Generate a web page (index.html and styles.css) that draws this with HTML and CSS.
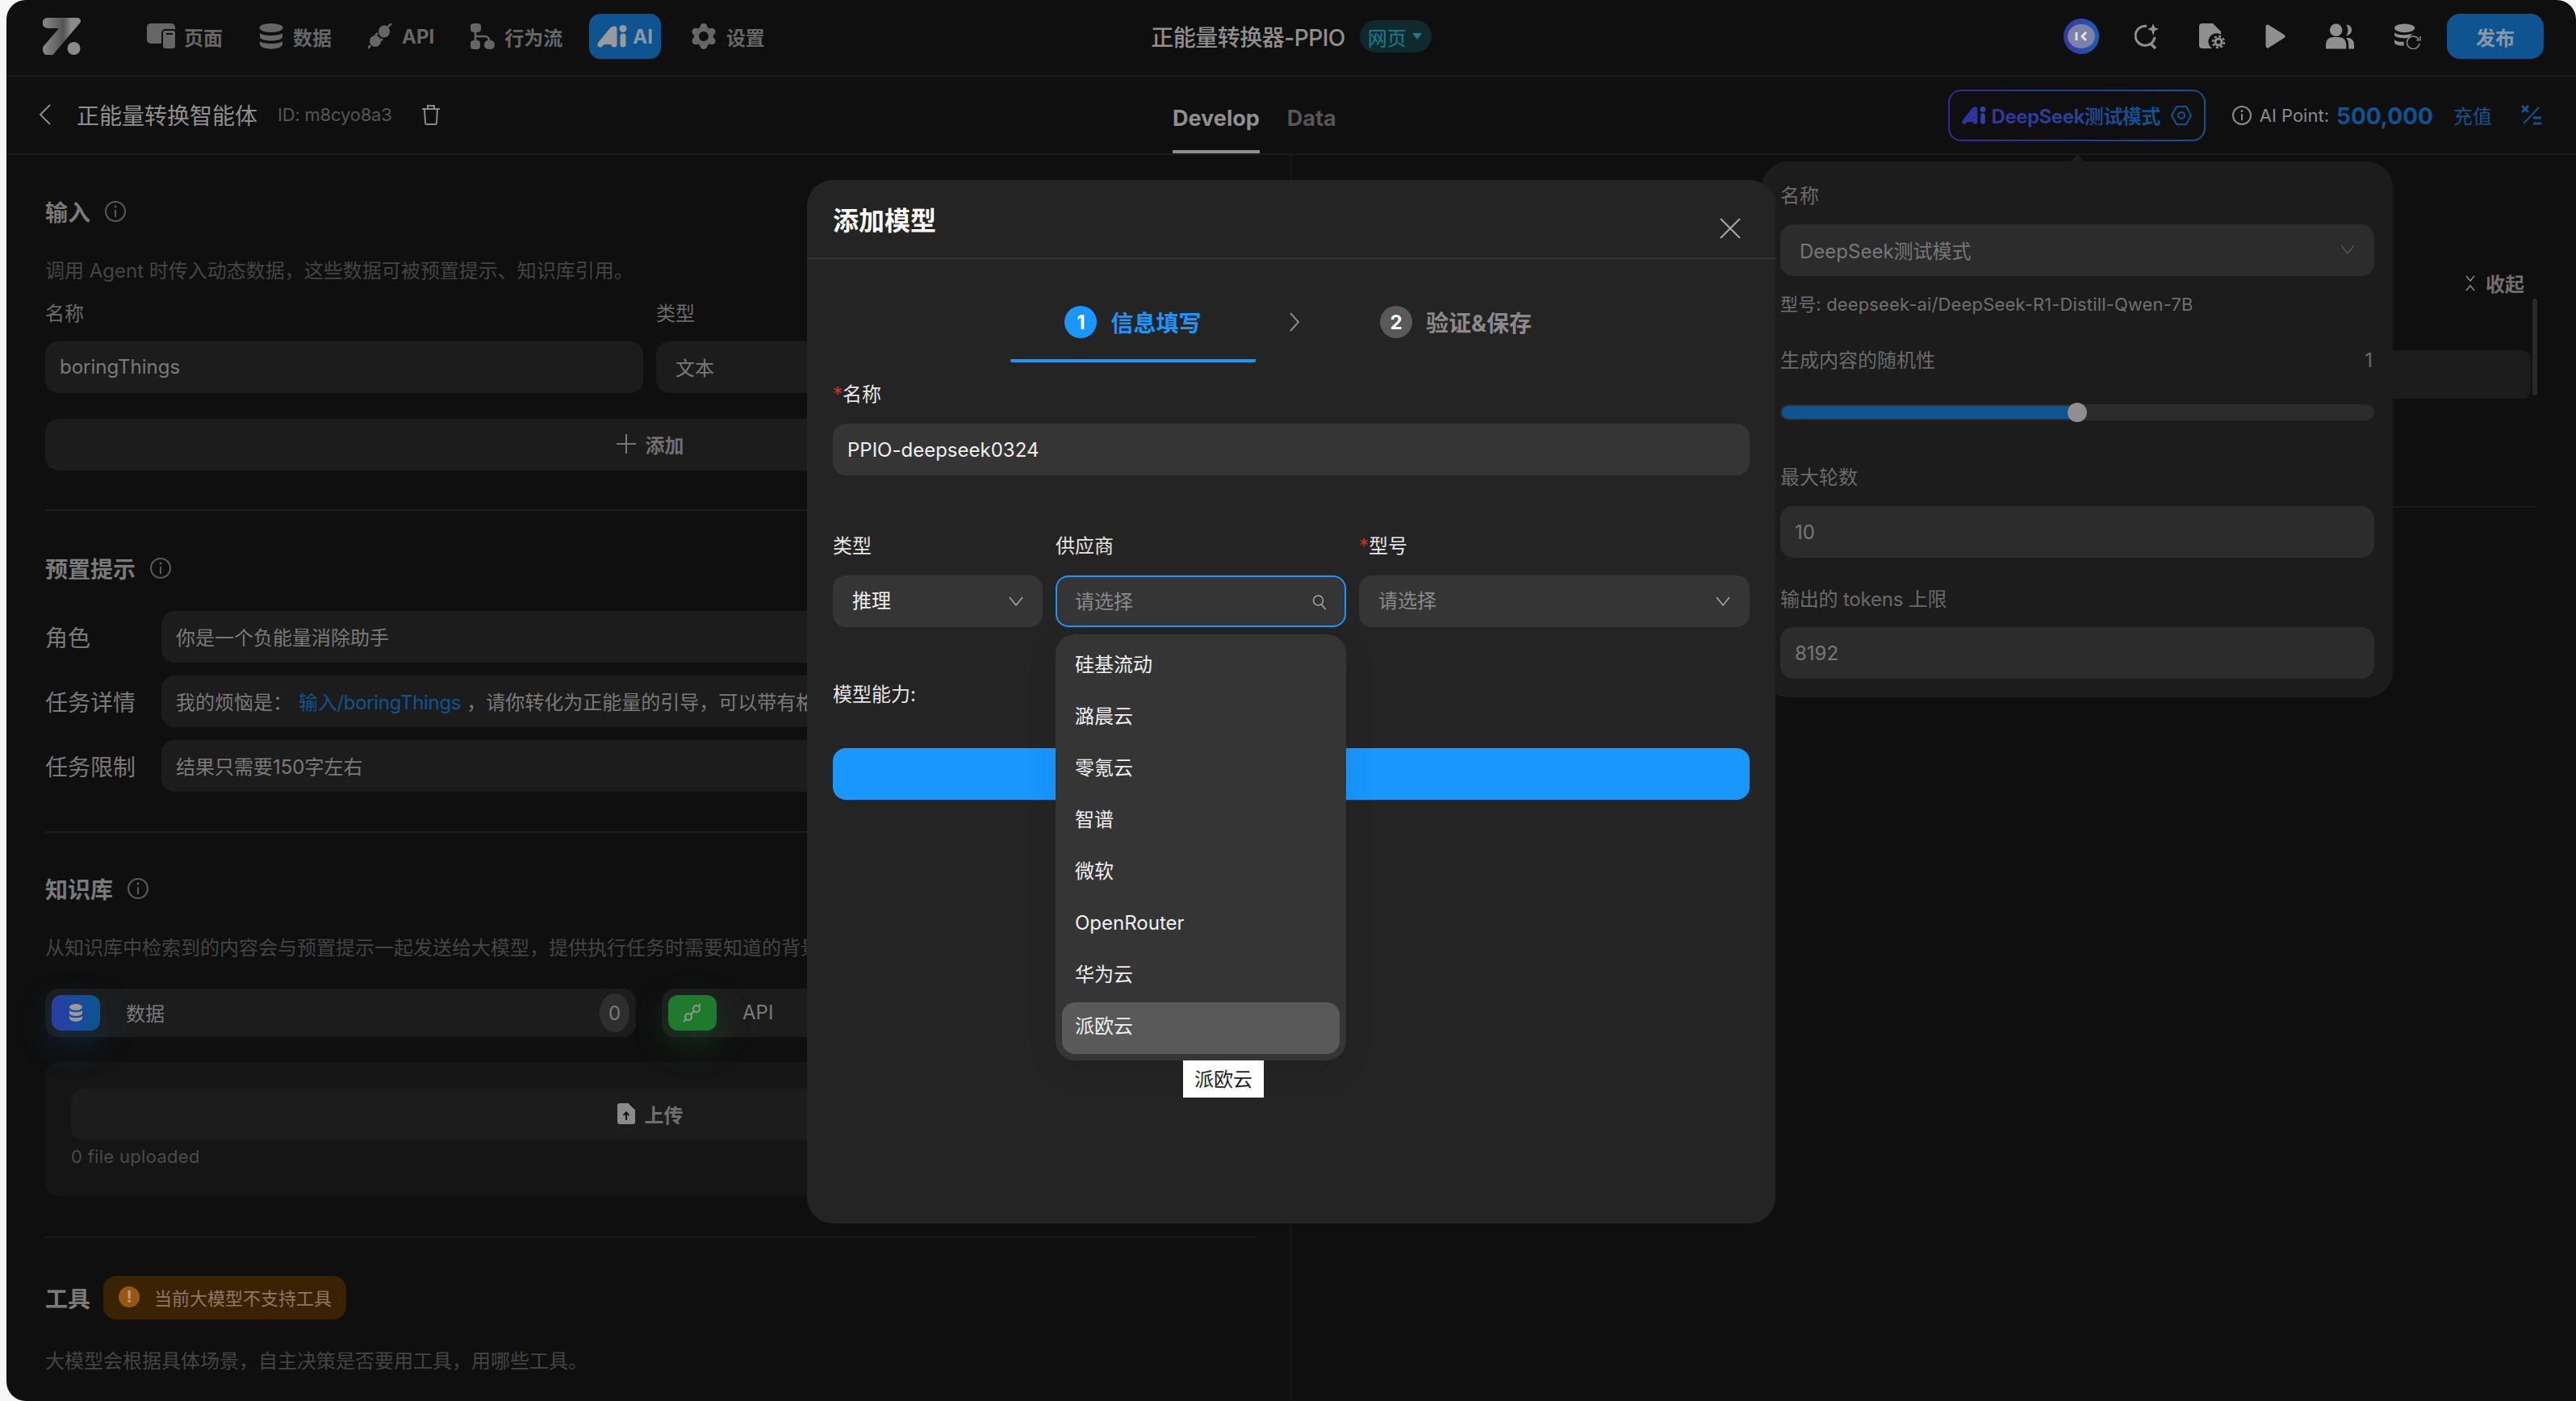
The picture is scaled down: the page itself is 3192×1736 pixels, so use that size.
FILE: index.html
```html
<!DOCTYPE html>
<html lang="zh-CN">
<head>
    <meta charset="UTF-8">
    <meta name="viewport" content="width=device-width, initial-scale=1.0">
    <title>正能量转换器-PPIO</title>
    <link rel="stylesheet" href="styles.css">
</head>
<body>
<div class="app">
    <header class="topbar">
        <div class="topbar-left">
            <svg class="logo" viewBox="0 0 47 46">
                <defs>
                    <linearGradient id="logoBar" x1="0" x2="1" y1="0" y2="0">
                        <stop offset="0" stop-color="#8a8a8a"/>
                        <stop offset="0.55" stop-color="#555"/>
                        <stop offset="0.75" stop-color="#8a8a8a"/>
                    </linearGradient>
                </defs>
                <path fill="url(#logoBar)" d="M6 0H43a4 4 0 0 1 3 6.500L15 43a8 8 0 0 1-15-5 6 6 0 0 1 2-4L20 13H6A6.500 6.500 0 0 1 6 0z"/>
                <circle cx="38.500" cy="38" r="8" fill="#8a8a8a"/>
            </svg>
            <nav class="nav">
                <a class="nav-item">
                    <svg class="nav-icon" width="36" height="32" viewBox="0 0 36 32">
                        <rect x="0" y="0" width="35" height="25" rx="5" fill="#666"/>
                        <rect x="19" y="8" width="17" height="24" rx="4" fill="#666" stroke="#0f0f0f" stroke-width="2"/>
                        <rect x="24" y="12" width="8" height="2" fill="#0f0f0f"/>
                    </svg>
                    页面
                </a>
                <a class="nav-item">
                    <svg class="nav-icon" width="30" height="32" viewBox="0 0 30 32">
                        <ellipse cx="15" cy="5.500" rx="14.500" ry="5.500" fill="#666"/>
                        <path d="M1 12c3 4 25 4 28 0v5c-2 6-26 6-28 0z" fill="#666"/>
                        <path d="M1 22c3 4 25 4 28 0v4c-2 7.500-26 7.500-28 0z" fill="#666"/>
                    </svg>
                    数据
                </a>
                <a class="nav-item">
                    <svg class="nav-icon" width="30" height="32" viewBox="0 0 30 32">
                        <ellipse cx="20" cy="10" rx="7" ry="7.500" fill="#666"/>
                        <ellipse cx="9" cy="22" rx="7" ry="7" fill="#666"/>
                        <path d="M24 5l5-5M3 27l-3 4M9 15l3-3M15 22l3-3" stroke="#666" stroke-width="2.500"/>
                    </svg>
                    API
                </a>
                <a class="nav-item">
                    <svg class="nav-icon" width="30" height="32" viewBox="0 0 30 32">
                        <rect x="0" y="0" width="13" height="11" rx="4" fill="#666"/>
                        <rect x="0" y="21" width="12" height="11" rx="4" fill="#666"/>
                        <rect x="17" y="21" width="13" height="11" rx="5" fill="#666"/>
                        <path d="M6 11v10M6 16h12a5 5 0 0 1 5 5" stroke="#666" stroke-width="2.500" fill="none"/>
                    </svg>
                    行为流
                </a>
                <a class="nav-item nav-item-active">
                    <svg class="nav-icon" width="38" height="28" viewBox="0 0 38 28">
                        <path d="M4 24L17 8c1.500-2 3-3 4-3v19" stroke="#9a9a9a" stroke-width="7" stroke-linecap="round" stroke-linejoin="round" fill="#9a9a9a"/>
                        <path d="M32 14v10" stroke="#9a9a9a" stroke-width="7" stroke-linecap="round"/>
                        <circle cx="32" cy="4.500" r="4.500" fill="#9a9a9a"/>
                    </svg>
                    AI
                </a>
                <a class="nav-item">
                    <svg class="nav-icon" width="32" height="32" viewBox="0 0 32 32">
                        <g fill="#666">
                            <circle cx="16" cy="16" r="12"/>
                            <circle cx="16" cy="4.500" r="4.500"/>
                            <circle cx="16" cy="27.500" r="4.500"/>
                            <circle cx="6" cy="10.200" r="4.500"/>
                            <circle cx="26" cy="10.200" r="4.500"/>
                            <circle cx="6" cy="21.800" r="4.500"/>
                            <circle cx="26" cy="21.800" r="4.500"/>
                        </g>
                        <circle cx="16" cy="16" r="6" fill="#0f0f0f"/>
                    </svg>
                    设置
                </a>
            </nav>
        </div>
        <div class="topbar-center">
            <span class="app-name">正能量转换器-PPIO</span>
            <span class="app-type">网页<i class="caret"></i></span>
        </div>
        <div class="topbar-right">
            <span class="avatar"><span class="avatar-inner">
                <svg width="18" height="12" viewBox="0 0 18 12"><path d="M3 1v10" stroke="#e0e0e0" stroke-width="3"/><path d="M15 1l-5 5 5 5" stroke="#e0e0e0" stroke-width="3" fill="none"/></svg>
            </span></span>
            <svg class="tool-icon" width="30" height="32" viewBox="0 0 30 32">
                <path d="M15 3.500A12 12 0 1 0 25 17" fill="none" stroke="#8f8f8f" stroke-width="3"/>
                <path d="M20 25l6 6" stroke="#8f8f8f" stroke-width="3.500"/>
                <path d="M23 0l2 5 5 2-5 2-2 6-2-6-5-2 5-2z" fill="#8f8f8f"/>
            </svg>
            <svg class="tool-icon" width="32" height="32" viewBox="0 0 32 32">
                <path d="M4 0h13l10 10v4a10 10 0 0 0-11 17H4a4 4 0 0 1-4-4V4a4 4 0 0 1 4-4z" fill="#8f8f8f"/>
                <path d="M19 0l7 7" stroke="#0f0f0f" stroke-width="2"/>
                <circle cx="24" cy="23" r="4" fill="none" stroke="#8f8f8f" stroke-width="3"/>
                <circle cx="24" cy="23" r="7" fill="none" stroke="#8f8f8f" stroke-width="2.500" stroke-dasharray="3 2.500"/>
            </svg>
            <svg class="tool-icon" width="25" height="30" viewBox="0 0 25 30">
                <path d="M3 3L22 15 3 27z" fill="#8f8f8f" stroke="#8f8f8f" stroke-width="5" stroke-linejoin="round"/>
            </svg>
            <svg class="tool-icon" width="35" height="32" viewBox="0 0 36 32">
                <ellipse cx="13" cy="8" rx="8" ry="8" fill="#8f8f8f"/>
                <path d="M0 32v-6a9 9 0 0 1 9-9h8a9 9 0 0 1 9 9v6z" fill="#8f8f8f"/>
                <path d="M26 1a7 7 0 0 1 0 14 12 12 0 0 0 0-14zM29 18a8 8 0 0 1 7 8v6h-7v-6a12 12 0 0 0-3-8z" fill="#8f8f8f"/>
            </svg>
            <svg class="tool-icon" width="33" height="32" viewBox="0 0 34 32">
                <ellipse cx="13" cy="5.500" rx="13" ry="5.500" fill="#8f8f8f"/>
                <path d="M0 11c3 4 19 4 24 1l-6 6c-8 1-15 0-18-3z" fill="#8f8f8f"/>
                <path d="M0 20c3 3 8 3 12 3v5c-6 0-10-1-12-3z" fill="#8f8f8f"/>
                <path d="M31 20a8 8 0 1 0 1 5" fill="none" stroke="#8f8f8f" stroke-width="1.500"/>
                <path d="M33 16v5h-5" fill="none" stroke="#8f8f8f" stroke-width="1.500"/>
            </svg>
            <button class="publish">发布</button>
        </div>
    </header>

    <div class="subbar">
        <div class="subbar-left">
            <svg class="back" width="16" height="26" viewBox="0 0 16 26"><path d="M14 1L2 13l12 12" fill="none" stroke="#8a8a8a" stroke-width="2"/></svg>
            <span class="agent-name">正能量转换智能体</span>
            <span class="agent-id">ID: m8cyo8a3</span>
            <svg class="trash" width="24" height="26" viewBox="0 0 24 26">
                <path d="M1 6h22M8 6V2h8v4M4 6l1 17a2 2 0 0 0 2 2h10a2 2 0 0 0 2-2l1-17" fill="none" stroke="#8a8a8a" stroke-width="2"/>
            </svg>
        </div>
        <div class="tabs">
            <span class="tab tab-active">Develop</span>
            <span class="tab">Data</span>
        </div>
        <div class="subbar-right">
            <button class="model-btn">
                <svg width="30" height="22" viewBox="0 0 30 22">
                    <path d="M3 19L13 6c1.500-2 2.500-3 3.500-3v16" stroke="#2f34a0" stroke-width="5.500" stroke-linecap="round" stroke-linejoin="round" fill="#2f34a0"/>
                    <path d="M26 11v8" stroke="#2b46a0" stroke-width="5.500" stroke-linecap="round"/>
                    <circle cx="26" cy="3.500" r="3.500" fill="#2b46a0"/>
                </svg>
                <span class="model-text">DeepSeek测试模式</span>
                <svg class="model-eye" width="26" height="24" viewBox="0 0 26 24">
                    <path d="M7 1h12l6 11-6 11H7L1 12z" fill="none" stroke="#0d5490" stroke-width="2" stroke-linejoin="round"/>
                    <circle cx="13" cy="12" r="4" fill="none" stroke="#0d5490" stroke-width="2"/>
                </svg>
            </button>
            <svg class="info-icon" width="24" height="24" viewBox="0 0 24 24">
                <circle cx="12" cy="12" r="11" fill="none" stroke="#8a8a8a" stroke-width="2"/>
                <path d="M12 10v8" stroke="#8a8a8a" stroke-width="2"/>
                <circle cx="12" cy="6.500" r="1.500" fill="#8a8a8a"/>
            </svg>
            <span class="point-label">AI Point:</span>
            <span class="point-value">500,000</span>
            <span class="recharge">充值</span>
            <svg class="collapse-icon" width="26" height="26" viewBox="0 0 26 26">
                <path d="M1 1l8 8M9 1L1 9" stroke="#0d5490" stroke-width="3"/>
                <path d="M3 23L22 3" stroke="#0d5490" stroke-width="2"/>
                <path d="M15 16h10M15 23h10" stroke="#0d5490" stroke-width="3"/>
            </svg>
        </div>
    </div>

    <main class="content">
        <section class="left-pane">
            <h2 class="sec-title">输入 <svg class="hint-icon" viewBox="0 0 26 26"><circle cx="13" cy="13" r="12" fill="none" stroke="#5a5a5a" stroke-width="2"/><path d="M13 11v9" stroke="#5a5a5a" stroke-width="2"/><circle cx="13" cy="7" r="1.500" fill="#5a5a5a"/></svg></h2>
            <p class="sec-hint">调用 Agent 时传入动态数据，这些数据可被预置提示、知识库引用。</p>
            <div class="var-labels">
                <span class="var-label var-label-name">名称</span>
                <span class="var-label">类型</span>
            </div>
            <div class="var-row">
                <div class="field var-name">boringThings</div>
                <div class="field var-type">文本</div>
            </div>
            <div class="wide-btn add-btn">
                <svg width="24" height="24" viewBox="0 0 24 24"><path d="M12 0v24M0 12h24" stroke="#777" stroke-width="2"/></svg>
                添加
            </div>
            <div class="divider"></div>

            <h2 class="sec-title">预置提示 <svg class="hint-icon" viewBox="0 0 26 26"><circle cx="13" cy="13" r="12" fill="none" stroke="#5a5a5a" stroke-width="2"/><path d="M13 11v9" stroke="#5a5a5a" stroke-width="2"/><circle cx="13" cy="7" r="1.500" fill="#5a5a5a"/></svg></h2>
            <div class="prompts">
                <div class="prompt-row">
                    <span class="prompt-label">角色</span>
                    <div class="field prompt-field">你是一个负能量消除助手</div>
                </div>
                <div class="prompt-row">
                    <span class="prompt-label">任务详情</span>
                    <div class="field prompt-field">我的烦恼是：<span class="var-link">输入/boringThings</span>，请你转化为正能量的引导，可以带有格</div>
                </div>
                <div class="prompt-row">
                    <span class="prompt-label">任务限制</span>
                    <div class="field prompt-field">结果只需要150字左右</div>
                </div>
            </div>
            <div class="divider divider-prompts"></div>

            <h2 class="sec-title">知识库 <svg class="hint-icon" viewBox="0 0 26 26"><circle cx="13" cy="13" r="12" fill="none" stroke="#5a5a5a" stroke-width="2"/><path d="M13 11v9" stroke="#5a5a5a" stroke-width="2"/><circle cx="13" cy="7" r="1.500" fill="#5a5a5a"/></svg></h2>
            <p class="sec-hint">从知识库中检索到的内容会与预置提示一起发送给大模型，提供执行任务时需要知道的背景</p>
            <div class="kb-cards">
                <div class="kb-card">
                    <span class="kb-tile kb-tile-data">
                        <svg width="18" height="22" viewBox="0 0 18 22">
                            <ellipse cx="9" cy="4" rx="8" ry="4" fill="#9a9a9a"/>
                            <path d="M1 8c2 3 14 3 16 0v4c-2 4-14 4-16 0z" fill="#9a9a9a"/>
                            <path d="M1 15c2 3 14 3 16 0v3c-2 5-14 5-16 0z" fill="#9a9a9a"/>
                        </svg>
                    </span>
                    <span class="kb-name">数据</span>
                    <span class="kb-count">0</span>
                </div>
                <div class="kb-card">
                    <span class="kb-tile kb-tile-api">
                        <svg width="24" height="24" viewBox="0 0 24 24">
                            <circle cx="7" cy="17" r="4" fill="none" stroke="#8a9a8a" stroke-width="2"/>
                            <circle cx="17" cy="7" r="4" fill="none" stroke="#8a9a8a" stroke-width="2"/>
                            <path d="M10 14l4-4M4 20l-3 3M20 4l2-3" stroke="#8a9a8a" stroke-width="2"/>
                        </svg>
                    </span>
                    <span class="kb-name">API</span>
                    <span class="kb-count">0</span>
                </div>
            </div>
            <div class="upload-panel">
                <div class="wide-btn upload-btn">
                    <svg width="22" height="26" viewBox="0 0 22 26">
                        <path d="M3 0h11l8 8v15a3 3 0 0 1-3 3H3a3 3 0 0 1-3-3V3a3 3 0 0 1 3-3z" fill="#8a8a8a"/>
                        <path d="M15 0l7 7" stroke="#161616" stroke-width="2"/>
                        <path d="M11 21v-9M7.500 15l3.500-3.500 3.500 3.500" fill="none" stroke="#161616" stroke-width="2"/>
                    </svg>
                    上传
                </div>
                <p class="upload-count">0 file uploaded</p>
            </div>
            <div class="divider divider-tools"></div>
            <div class="tools-head">
                <h2 class="sec-title">工具</h2>
                <div class="tools-warning">
                    <span class="warn-dot">!</span>
                    当前大模型不支持工具
                </div>
            </div>
            <p class="sec-hint sec-hint-tools">大模型会根据具体场景，自主决策是否要用工具，用哪些工具。</p>
        </section>

        <section class="right-pane">
            <div class="fold">
                <svg width="14" height="20" viewBox="0 0 14 20"><path d="M2 1l5 6 5-6M2 19l5-6 5 6" fill="none" stroke="#8a8a8a" stroke-width="1.500"/></svg>
                收起
            </div>
            <div class="preview-card"></div>
            <div class="preview-line"></div>
            <span class="preview-scroll"></span>
        </section>
    </main>

    <aside class="param-popover">
        <span class="param-arrow"></span>
        <label class="param-label">名称</label>
        <div class="param-field param-select">DeepSeek测试模式
            <svg width="18" height="12" viewBox="0 0 18 12"><path d="M1 1l8 10 8-10" fill="none" stroke="#555" stroke-width="1.500"/></svg>
        </div>
        <p class="param-model">型号: deepseek-ai/DeepSeek-R1-Distill-Qwen-7B</p>
        <div class="param-slider-head"><span>生成内容的随机性</span><span>1</span></div>
        <div class="slider">
            <div class="slider-fill"></div>
            <span class="slider-thumb"></span>
        </div>
        <label class="param-label param-label-rounds">最大轮数</label>
        <div class="param-field param-input">10</div>
        <label class="param-label param-label-tokens">输出的 tokens 上限</label>
        <div class="param-field param-input">8192</div>
    </aside>

    <div class="modal">
        <div class="modal-head">
            <h3 class="modal-title">添加模型</h3>
            <svg class="modal-close" width="26" height="26" viewBox="0 0 26 26"><path d="M1 1l24 24M25 1L1 25" stroke="#a8a8a8" stroke-width="2"/></svg>
        </div>
        <div class="steps">
            <div class="step step-active"><span class="step-num">1</span>信息填写</div>
            <svg class="step-arrow" width="14" height="24" viewBox="0 0 14 24"><path d="M2 1l10 11L2 23" fill="none" stroke="#8a8a8a" stroke-width="2"/></svg>
            <div class="step"><span class="step-num">2</span>验证&amp;保存</div>
        </div>
        <form class="modal-form">
            <label class="form-label"><em>*</em>名称</label>
            <div class="form-input form-input-name">PPIO-deepseek0324</div>
            <div class="form-grid">
                <label class="form-label">类型</label>
                <label class="form-label">供应商</label>
                <label class="form-label"><em>*</em>型号</label>
                <div class="form-input form-select">推理
                    <svg width="18" height="12" viewBox="0 0 18 12"><path d="M1 1l8 10 8-10" fill="none" stroke="#a8a8a8" stroke-width="1.500"/></svg>
                </div>
                <div class="form-input form-select form-select-open"><span class="placeholder">请选择</span>
                    <svg width="18" height="20" viewBox="0 0 18 20"><circle cx="7.500" cy="8" r="6" fill="none" stroke="#a8a8a8" stroke-width="1.500"/><path d="M11.500 13l5 6" stroke="#a8a8a8" stroke-width="1.500"/></svg>
                </div>
                <div class="form-input form-select"><span class="placeholder">请选择</span>
                    <svg width="18" height="12" viewBox="0 0 18 12"><path d="M1 1l8 10 8-10" fill="none" stroke="#a8a8a8" stroke-width="1.500"/></svg>
                </div>
            </div>
            <div class="form-ability">模型能力:</div>
            <button class="form-submit" type="button"></button>
        </form>
        <ul class="vendor-menu">
            <li>硅基流动</li>
            <li>潞晨云</li>
            <li>零氪云</li>
            <li>智谱</li>
            <li>微软</li>
            <li>OpenRouter</li>
            <li>华为云</li>
            <li class="vendor-hover">派欧云</li>
        </ul>
        <div class="vendor-tip">派欧云</div>
    </div>
</div>
</body>
</html>
```

FILE: styles.css
```css
* {
    box-sizing: border-box;
}
html, body {
    margin: 0;
    height: 100%;
    background: #f6f6f6;
    overflow: hidden;
}
body {
    font-family: Inter, "Noto Sans CJK SC", sans-serif;
    font-size: 24px;
    color: #8a8a8a;
}
h2, h3, p, ul {
    margin: 0;
    padding: 0;
}
button {
    border: 0;
    font-family: inherit;
}

.app {
    position: relative;
    height: 1736px;
    margin-left: 8px;
    background: #0f0f0f;
    border-radius: 24px 24px 0 24px;
    overflow: hidden;
}

/* top bar */
.topbar {
    display: grid;
    grid-template-columns: 1fr auto 1fr;
    align-items: center;
    height: 95px;
    padding-bottom: 3px;
    border-bottom: 2px solid #1c1c1c;
}
.topbar-left {
    display: flex;
    align-items: center;
    padding-left: 45px;
}
.logo {
    width: 47px;
    height: 46px;
    margin-right: 82px;
}
.nav {
    display: flex;
    align-items: center;
    gap: 45px;
}
.nav-item {
    display: flex;
    align-items: center;
    gap: 12px;
    font-size: 24px;
    font-weight: 700;
    color: #666;
    white-space: nowrap;
}
.nav-item:nth-child(1) {
    gap: 10px;
}
.nav-item-active {
    height: 56px;
    margin: 0 -8px 0 -12px;
    padding: 0 10px;
    gap: 6px;
    background: #0d5490;
    color: #8a98a6;
    border-radius: 14px;
}
.topbar-center {
    display: flex;
    align-items: center;
    gap: 18px;
}
.app-name {
    font-size: 28px;
    font-weight: 500;
    letter-spacing: -0.5px;
    color: #8f8f8f;
}
.app-type {
    display: flex;
    align-items: center;
    gap: 7px;
    height: 40px;
    padding: 0 12px 0 10px;
    font-size: 24px;
    color: #0f7f8c;
    background: #10292c;
    border-radius: 20px;
}
.caret {
    width: 0;
    height: 0;
    border: 6px solid transparent;
    border-top: 8px solid #0f7f8c;
    border-bottom: 0;
}
.topbar-right {
    display: flex;
    align-items: center;
    justify-content: flex-end;
    padding-right: 40px;
}
.avatar {
    display: flex;
    align-items: center;
    justify-content: center;
    width: 44px;
    height: 44px;
    margin-right: 44px;
    background: linear-gradient(90deg, #3a33a8, #1b5fb0);
    border-radius: 50%;
}
.avatar-inner {
    display: flex;
    align-items: center;
    justify-content: center;
    width: 34px;
    height: 30px;
    background: #7d82a8;
    border-radius: 50%;
}
.tool-icon {
    margin-right: 50px;
}
.publish {
    width: 120px;
    height: 56px;
    margin-left: -18px;
    font-size: 24px;
    font-weight: 700;
    color: #8a98a6;
    background: #0d5490;
    border-radius: 16px;
}

/* second bar */
.subbar {
    display: flex;
    align-items: center;
    height: 97px;
    border-bottom: 2px solid #1c1c1c;
}
.subbar-left {
    display: flex;
    align-items: center;
    width: 1445px;
    padding: 0 0 2px 40px;
}
.back {
    margin-right: 31px;
}
.agent-name {
    font-size: 28px;
    color: #8f8f8f;
}
.agent-id {
    margin-left: 25px;
    font-size: 22px;
    letter-spacing: -0.2px;
    color: #555;
}
.trash {
    margin-left: 36px;
}
.tabs {
    display: flex;
    align-self: stretch;
    gap: 34px;
}
.tab {
    display: flex;
    align-items: center;
    padding-top: 12px;
    font-size: 27px;
    font-weight: 700;
    color: #555;
    border-bottom: 4px solid transparent;
}
.tab-active {
    color: #8f8f8f;
    border-bottom-color: #8f8f8f;
}
.subbar-right {
    display: flex;
    align-items: center;
    margin-left: auto;
    padding-right: 42px;
}
.model-btn {
    display: flex;
    align-items: center;
    justify-content: center;
    gap: 7px;
    width: 319px;
    height: 64px;
    margin-right: 33px;
    border: 2px solid transparent;
    background: linear-gradient(#0f0f0f, #0f0f0f) padding-box, linear-gradient(90deg, #35279c, #0d5490) border-box;
    border-radius: 16px;
}
.model-text {
    font-size: 24px;
    font-weight: 700;
    letter-spacing: -0.5px;
    background: linear-gradient(90deg, #38329c, #0d5490);
    -webkit-background-clip: text;
    background-clip: text;
    color: transparent;
}
.model-eye {
    margin-left: 6px;
}
.point-label {
    margin-left: 10px;
    font-size: 22px;
    color: #8a8a8a;
}
.point-value {
    margin-left: 9px;
    padding-top: 2px;
    font-size: 28px;
    font-weight: 700;
    color: #0d5490;
}
.recharge {
    margin-left: 25px;
    font-size: 24px;
    color: #0d5490;
}
.collapse-icon {
    margin-left: 36px;
}

/* page content behind the modal */
.content {
    display: flex;
    height: 1544px;
}
.left-pane {
    width: 1592px;
    padding: 50px 44px 0 48px;
    border-right: 1px solid #1c1c1c;
    flex-shrink: 0;
}
.sec-title {
    display: flex;
    align-items: center;
    gap: 18px;
    height: 40px;
    font-size: 28px;
    font-weight: 700;
    color: #7a7a7a;
}
.hint-icon {
    width: 26px;
    height: 26px;
}
.sec-hint {
    height: 34px;
    margin-top: 36px;
    padding-top: 1px;
    font-size: 24px;
    line-height: 34px;
    color: #444;
    white-space: nowrap;
}
.var-labels {
    display: flex;
    height: 34px;
    margin-top: 19px;
}
.var-label {
    padding-top: 1px;
    font-size: 24px;
    line-height: 34px;
    color: #6a6a6a;
}
.var-label-name {
    width: 757px;
}
.var-row {
    display: flex;
    gap: 16px;
    margin-top: 18px;
}
.field {
    display: flex;
    align-items: center;
    height: 64px;
    padding: 0 18px 2px;
    background: #1c1c1c;
    border-radius: 16px;
    color: #7a7a7a;
    white-space: nowrap;
    overflow: hidden;
}
.var-name {
    width: 741px;
}
.var-type {
    flex: 1;
    padding-left: 24px;
}
.wide-btn {
    display: flex;
    align-items: center;
    justify-content: center;
    gap: 12px;
    height: 64px;
    padding-bottom: 2px;
    font-weight: 700;
    color: #6f6f6f;
    background: #1c1c1c;
    border-radius: 16px;
}
.add-btn {
    margin-top: 32px;
}
.divider {
    height: 2px;
    margin: 48px 0 51px;
    background: #1c1c1c;
}
.prompts {
    display: flex;
    flex-direction: column;
    gap: 16px;
    margin-top: 33px;
}
.prompt-row {
    display: flex;
    align-items: center;
}
.prompt-label {
    width: 144px;
    font-size: 28px;
    color: #7a7a7a;
}
.prompt-field {
    flex: 1;
    padding: 0 20px 2px 18px;
}
.var-link {
    margin: 0 7px 0 8px;
    letter-spacing: -0.3px;
    color: #0d5490;
}
.divider-prompts {
    margin: 49px 0 49px;
}
.kb-cards {
    display: grid;
    grid-template-columns: 732px 1fr;
    gap: 32px;
    margin-top: 34px;
}
.kb-card {
    position: relative;
    display: flex;
    align-items: center;
    height: 60px;
    padding: 0 8px 0;
    background: #1c1c1c;
    border-radius: 16px;
}
.kb-tile {
    display: flex;
    align-items: center;
    justify-content: center;
    width: 60px;
    height: 44px;
    border-radius: 12px;
}
.kb-tile-data {
    background: linear-gradient(90deg, #2b3ea6, #0d5490);
    box-shadow: 0 14px 40px rgba(13, 84, 144, 0.35);
}
.kb-tile-api {
    background: #1f7a30;
    box-shadow: 0 14px 40px rgba(31, 122, 48, 0.35);
}
.kb-name {
    margin-left: 32px;
    padding-bottom: 2px;
    color: #7a7a7a;
}
.kb-count {
    display: flex;
    align-items: center;
    justify-content: center;
    width: 37px;
    height: 48px;
    margin-left: auto;
    background: #2e2e2e;
    border-radius: 50%;
    color: #7a7a7a;
}
.upload-panel {
    height: 166px;
    margin-top: 31px;
    padding: 33px 32px 0;
    background: #151515;
    border-radius: 16px;
}
.upload-count {
    height: 34px;
    margin-top: 3px;
    font-size: 22px;
    letter-spacing: 0.3px;
    line-height: 34px;
    color: #4a4a4a;
}
.divider-tools {
    margin: 50px 0 47px;
}
.tools-head {
    display: flex;
    align-items: center;
    gap: 16px;
}
.tools-warning {
    display: flex;
    align-items: center;
    gap: 18px;
    height: 54px;
    padding: 0 18px 2px 19px;
    font-size: 22px;
    color: #8a7a66;
    background: #3b2203;
    border-radius: 16px;
}
.warn-dot {
    display: flex;
    align-items: center;
    justify-content: center;
    width: 26px;
    height: 26px;
    font-size: 20px;
    font-weight: 700;
    color: #b8a080;
    background: #96590f;
    border-radius: 50%;
}
.sec-hint-tools {
    margin-top: 34px;
}
.right-pane {
    position: relative;
    flex: 1;
    padding: 140px 48px 0 0;
}
.fold {
    display: flex;
    align-items: center;
    justify-content: flex-end;
    gap: 12px;
    height: 40px;
    padding: 0 16px 3px 0;
    font-weight: 700;
    color: #6f6f6f;
}
.preview-card {
    height: 60px;
    margin-top: 62px;
    margin-right: 8px;
    background: #1c1c1c;
    border-radius: 12px;
}
.preview-line {
    height: 2px;
    margin-top: 133px;
    background: #1c1c1c;
}
.preview-scroll {
    position: absolute;
    top: 178px;
    right: 48px;
    width: 6px;
    height: 120px;
    background: #2a2a2a;
    border-radius: 3px;
}

/* parameters popover, opened from the model button */
.param-popover {
    position: absolute;
    left: 2175px;
    top: 200px;
    width: 782px;
    height: 664px;
    padding: 26px 23px 0;
    background: #1c1c1c;
    border-radius: 32px;
}
.param-arrow {
    position: absolute;
    top: -9px;
    left: 383px;
    width: 0;
    height: 0;
    border: 8px solid transparent;
    border-bottom: 9px solid #1c1c1c;
    border-top: 0;
}
.param-label {
    display: block;
    height: 34px;
    font-size: 24px;
    line-height: 34px;
    color: #6a6a6a;
}
.param-field {
    display: flex;
    align-items: center;
    height: 64px;
    margin-top: 18px;
    padding: 0 24px 2px;
    font-size: 24px;
    color: #777;
    background: #2c2c2c;
    border-radius: 16px;
}
.param-select {
    justify-content: space-between;
}
.param-input {
    padding: 0 18px;
}
.param-model {
    height: 34px;
    margin-top: 18px;
    font-size: 22px;
    letter-spacing: 0.15px;
    line-height: 34px;
    color: #6f6f6f;
}
.param-slider-head {
    display: flex;
    justify-content: space-between;
    height: 34px;
    margin-top: 36px;
    padding-right: 2px;
    font-size: 24px;
    line-height: 34px;
    color: #6a6a6a;
}
.slider {
    position: relative;
    height: 20px;
    margin-top: 37px;
    padding: 2px;
    background: #2c2c2c;
    border-radius: 10px;
}
.slider-fill {
    width: 366px;
    height: 16px;
    background: #0d5490;
    border-radius: 8px;
}
.slider-thumb {
    position: absolute;
    left: 356px;
    top: -2px;
    width: 24px;
    height: 24px;
    background: #8f8f8f;
    border-radius: 50%;
}
.param-label-rounds {
    margin-top: 54px;
}
.param-label-tokens {
    margin-top: 35px;
    letter-spacing: -0.2px;
}
.param-label-tokens + .param-field {
    margin-top: 17px;
}

/* add model modal */
.modal {
    position: absolute;
    left: 992px;
    top: 223px;
    width: 1200px;
    height: 1293px;
    background: #242424;
    border-radius: 32px;
    color: #e6e6e6;
}
.modal-head {
    display: flex;
    justify-content: space-between;
    height: 98px;
    padding: 30px 43px 0 32px;
    border-bottom: 2px solid #333;
}
.modal-title {
    font-size: 32px;
    line-height: 42px;
    font-weight: 700;
    color: #fff;
}
.modal-close {
    margin-top: 17px;
}
.steps {
    display: flex;
    align-items: flex-start;
    margin-top: 58px;
    padding-left: 252px;
}
.step {
    display: flex;
    align-items: center;
    justify-content: center;
    gap: 17px;
    width: 304px;
    height: 70px;
    padding: 0 0 26px 0;
    font-size: 28px;
    font-weight: 700;
    color: #8a8a8a;
    border-bottom: 4px solid transparent;
    border-radius: 0 0 2px 2px;
}
.step-active {
    color: #1797ff;
    border-bottom-color: #1797ff;
}
.step-num {
    display: flex;
    align-items: center;
    justify-content: center;
    width: 40px;
    height: 40px;
    font-size: 24px;
    font-weight: 700;
    color: #fff;
    background: #595959;
    border-radius: 50%;
}
.step-active .step-num {
    background: #1797ff;
}
.step-arrow {
    width: 14px;
    margin: 8px 41px 0;
}
.modal-form {
    padding: 0 32px;
}
.form-label {
    display: block;
    height: 34px;
    font-size: 24px;
    line-height: 34px;
    color: #e6e6e6;
}
.form-label em {
    font-style: normal;
    color: #c8352b;
}
.modal-form > .form-label {
    margin-top: 23px;
}
.form-input {
    display: flex;
    align-items: center;
    height: 64px;
    padding: 0 18px;
    font-size: 24px;
    color: #f0f0f0;
    background: #353535;
    border-radius: 16px;
}
.form-input-name {
    margin-top: 19px;
}
.form-grid {
    display: grid;
    grid-template-columns: 260px 360px 1fr;
    column-gap: 16px;
    row-gap: 19px;
    margin-top: 71px;
}
.form-select {
    justify-content: space-between;
    padding: 0 24px 6px 24px;
}
.form-select svg {
    margin-top: 6px;
}
.form-select-open {
    border: 2px solid #1797ff;
    padding: 0 22px 4px 22px;
}
.placeholder {
    color: #8a8a8a;
}
.form-ability {
    width: fit-content;
    height: 34px;
    margin-top: 66px;
    padding-top: 1px;
    line-height: 34px;
}
.form-submit {
    display: block;
    width: 100%;
    height: 64px;
    margin-top: 50px;
    background: #1797ff;
    border-radius: 16px;
}
.vendor-menu {
    position: absolute;
    left: 308px;
    top: 563px;
    width: 360px;
    padding: 8px;
    list-style: none;
    background: #353535;
    border-radius: 24px;
    box-shadow: 0 10px 40px rgba(0, 0, 0, 0.08);
}
.vendor-menu li {
    height: 64px;
    padding: 0 16px;
    font-size: 24px;
    line-height: 59px;
    color: #f0f0f0;
    border-radius: 16px;
}
.vendor-hover {
    background: #595959;
}
.vendor-tip {
    position: absolute;
    left: 466px;
    top: 1091px;
    width: 100px;
    height: 46px;
    font-size: 24px;
    line-height: 47px;
    text-align: center;
    color: #222;
    background: #fff;
}
```
